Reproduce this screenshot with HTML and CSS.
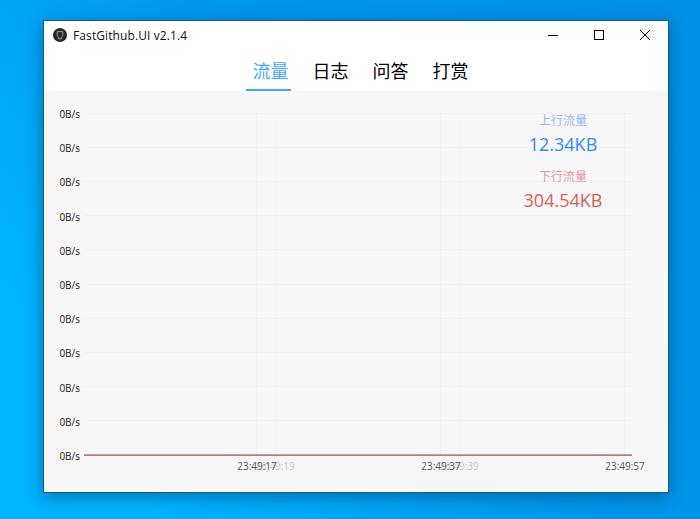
FILE: index.html
```html
<!DOCTYPE html>
<html lang="zh-CN">
<head>
    <meta charset="UTF-8">
    <title>FastGithub.UI</title>
    <link rel="stylesheet" href="styles.css">
</head>
<body>
    <div class="window">
        <div class="titlebar">
            <svg class="logo" width="14" height="14" viewBox="0 0 14 14">
                <circle cx="7" cy="7" r="7" fill="#262626"/>
                <path d="M4.2 3.6h5.6v4.2l-1.3 1.1v2H5.5v-2L4.2 7.8z" fill="none" stroke="#9a9a9a" stroke-width="1"/>
            </svg>
            <span class="title">FastGithub.UI v2.1.4</span>
            <div class="controls">
                <div class="ctl">
                    <svg width="12" height="12" viewBox="0 0 12 12"><path d="M1 6.5h10" stroke="#000" fill="none"/></svg>
                </div>
                <div class="ctl">
                    <svg width="12" height="12" viewBox="0 0 12 12"><rect x="1.5" y="1.5" width="9" height="9" stroke="#000" fill="none"/></svg>
                </div>
                <div class="ctl">
                    <svg width="12" height="12" viewBox="0 0 12 12"><path d="M1 1l10 10M11 1L1 11" stroke="#000" fill="none"/></svg>
                </div>
            </div>
        </div>
        <div class="tabs">
            <div class="tab active">流量</div>
            <div class="tab">日志</div>
            <div class="tab">问答</div>
            <div class="tab">打赏</div>
        </div>
        <div class="chart">
            <div class="yaxis">
                <span>0B/s</span><span>0B/s</span><span>0B/s</span><span>0B/s</span>
                <span>0B/s</span><span>0B/s</span><span>0B/s</span><span>0B/s</span>
                <span>0B/s</span><span>0B/s</span><span>0B/s</span>
            </div>
            <div class="plot">
                <svg class="lines" width="548" height="343" viewBox="0 0 548 343">
                    <g stroke="#f1f1f1" fill="none">
                        <path d="M0 .5h548M0 34.5h548M0 68.5h548M0 102.5h548M0 136.5h548M0 171.5h548M0 205.5h548M0 239.5h548M0 273.5h548M0 307.5h548"/>
                        <path d="M172.5 0v341M356.5 0v341M540.5 0v341"/>
                    </g>
                    <path d="M191.5 0v341M375.5 0v341" stroke="#f4f4f4" fill="none"/>
                    <path d="M0 341.5h548" stroke="#a9abb8" fill="none"/>
                    <path d="M0 342.5h548" stroke="#dc6a6c" fill="none"/>
                </svg>
                <div class="xaxis">
                    <span class="tick old" style="left: 191px">23:49:19</span>
                    <span class="tick old" style="left: 375px">23:49:39</span>
                    <span class="tick" style="left: 173px">23:49:17</span>
                    <span class="tick" style="left: 357px">23:49:37</span>
                    <span class="tick" style="left: 541px">23:49:57</span>
                </div>
            </div>
            <div class="legend">
                <div class="legend-name up-name">上行流量</div>
                <div class="legend-value up-value">12.34KB</div>
                <div class="legend-name down-name">下行流量</div>
                <div class="legend-value down-value">304.54KB</div>
            </div>
        </div>
    </div>
</body>
</html>
```
FILE: styles.css
```css
html,body{
    margin: 0;
    height: 100%;
}
body{
    box-sizing: border-box;
    height: 519px;
    padding: 20px 31px 26px 43px;
    overflow: hidden;
    background: linear-gradient(235deg, #008fe6 0%, #0097ec 45%, #00b4ff 85%);
    font-family: "Open Sans", "Noto Sans CJK SC", sans-serif;
}
.window{
    width: 624px;
    height: 471px;
    display: flex;
    flex-direction: column;
    background: #fff;
    border: 1px solid #0f5f85;
    box-shadow: 0 4px 16px rgba(0,40,80,0.45);
}
.titlebar{
    height: 28px;
    display: flex;
    align-items: center;
    padding-left: 9px;
}
.logo{
    margin-right: 6px;
}
.title{
    font-size: 12px;
    letter-spacing: 0.1px;
    color: #111;
}
.controls{
    margin-left: auto;
    display: flex;
}
.ctl{
    width: 46px;
    height: 28px;
    display: flex;
    align-items: center;
    justify-content: center;
}
.tabs{
    height: 41px;
    display: flex;
    justify-content: center;
    gap: 15px;
    padding-left: 4px;
    margin-top: 1px;
}
.tab{
    box-sizing: border-box;
    width: 45px;
    height: 41px;
    line-height: 41px;
    padding-left: 5px;
    text-align: center;
    font-size: 18px;
    color: #000;
    font-family: "Noto Sans CJK SC", sans-serif;
}
.tab.active{
    color: #3fa9f5;
    border-bottom: 2px solid #3fa9f5;
}
.chart{
    position: relative;
    flex: 1;
    display: flex;
    background: #f7f7f7;
    padding: 22px 36px 0 0;
}
.yaxis{
    box-sizing: border-box;
    width: 40px;
    height: 356px;
    display: flex;
    flex-direction: column;
    justify-content: space-between;
    align-items: flex-end;
    padding-right: 4px;
    margin-top: -6px;
    font-size: 10px;
    line-height: 14px;
    color: #222;
}
.plot{
    position: relative;
    width: 548px;
}
.lines{
    display: block;
}
.xaxis{
    position: relative;
    height: 20px;
    font-size: 10px;
    color: #555;
}
.tick{
    position: absolute;
    top: 3px;
    transform: translateX(-50%);
    white-space: nowrap;
}
.tick.old{
    color: #c8c8c8;
}
.legend{
    position: absolute;
    top: 20px;
    right: 45px;
    width: 120px;
    text-align: center;
}
.legend-name{
    font-size: 12px;
    line-height: 18px;
    font-family: "Noto Sans CJK SC", sans-serif;
}
.legend-value{
    font-size: 18px;
    line-height: 30px;
    margin-bottom: 8px;
}
.up-name{
    color: #9db6f2;
}
.up-value{
    color: #2f8cf5;
}
.down-name{
    color: #e39a9a;
}
.down-value{
    color: #d9605f;
}
```
